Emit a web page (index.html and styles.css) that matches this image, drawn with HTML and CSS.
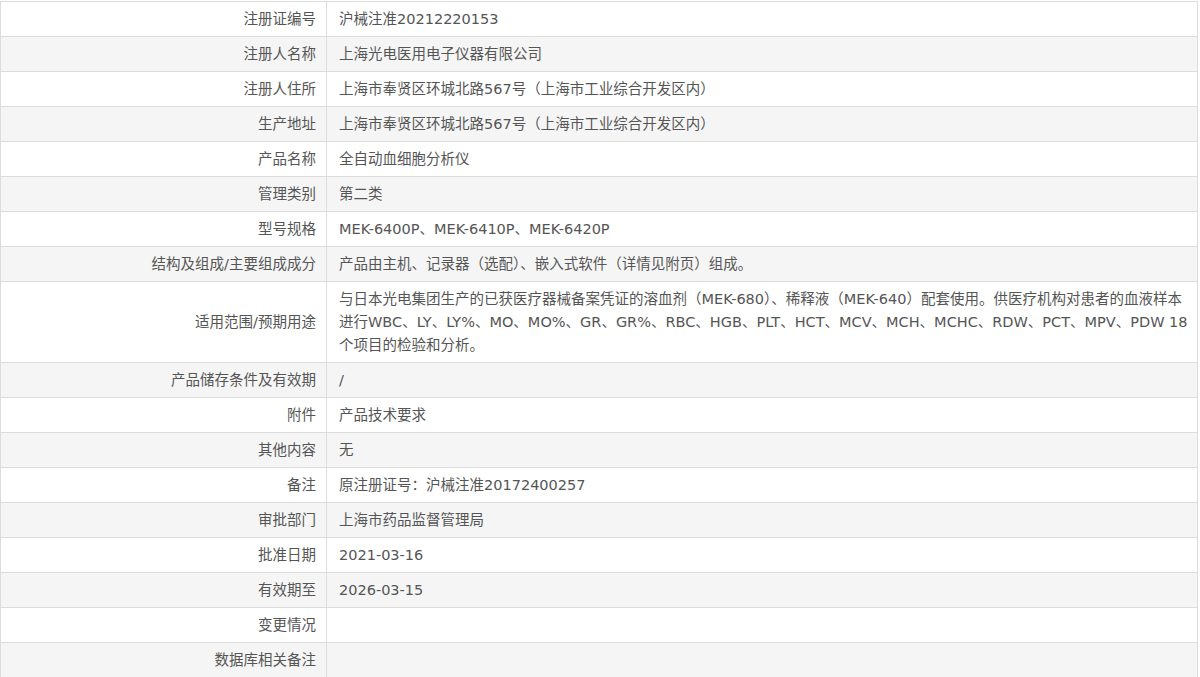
FILE: index.html
```html
<!DOCTYPE html>
<html lang="zh-CN">
<head>
<meta charset="utf-8">
<title>注册证信息</title>
<link rel="stylesheet" href="styles.css">
</head>
<body>
<table class="info">
<colgroup><col class="c-label"><col class="c-value"></colgroup>
<tbody>
<tr><th>注册证编号</th><td>沪械注准20212220153</td></tr>
<tr><th>注册人名称</th><td>上海光电医用电子仪器有限公司</td></tr>
<tr><th>注册人住所</th><td>上海市奉贤区环城北路567号（上海市工业综合开发区内）</td></tr>
<tr><th>生产地址</th><td>上海市奉贤区环城北路567号（上海市工业综合开发区内）</td></tr>
<tr><th>产品名称</th><td>全自动血细胞分析仪</td></tr>
<tr><th>管理类别</th><td>第二类</td></tr>
<tr><th>型号规格</th><td>MEK-6400P、MEK-6410P、MEK-6420P</td></tr>
<tr><th>结构及组成/主要组成成分</th><td>产品由主机、记录器（选配）、嵌入式软件（详情见附页）组成。</td></tr>
<tr><th>适用范围/预期用途</th><td>与日本光电集团生产的已获医疗器械备案凭证的溶血剂（MEK-680）、稀释液（MEK-640）配套使用。供医疗机构对患者的血液样本进行WBC、LY、LY%、MO、MO%、GR、GR%、RBC、HGB、PLT、HCT、MCV、MCH、MCHC、RDW、PCT、MPV、PDW 18个项目的检验和分析。</td></tr>
<tr><th>产品储存条件及有效期</th><td>/</td></tr>
<tr><th>附件</th><td>产品技术要求</td></tr>
<tr><th>其他内容</th><td>无</td></tr>
<tr><th>备注</th><td>原注册证号：沪械注准20172400257</td></tr>
<tr><th>审批部门</th><td>上海市药品监督管理局</td></tr>
<tr><th>批准日期</th><td>2021-03-16</td></tr>
<tr><th>有效期至</th><td>2026-03-15</td></tr>
<tr><th>变更情况</th><td></td></tr>
<tr><th>数据库相关备注</th><td></td></tr>
</tbody>
</table>
</body>
</html>
```

FILE: styles.css
```css
html, body {
  margin: 0;
  padding: 0;
  background: #ffffff;
}

body {
  font-family: "DejaVu Sans", "Noto Sans CJK SC", sans-serif;
  font-size: 14.5px;
  color: #555555;
}

.info {
  border-collapse: collapse;
  width: 1198px;
  margin-top: 1px;
  table-layout: fixed;
}

.c-label { width: 326px; }

.info th,
.info td {
  border: 1px solid #dcdcdc;
  line-height: 23px;
  padding: 6px 4px 5px 12px;
  vertical-align: middle;
  font-weight: normal;
}

.info th {
  text-align: right;
  padding-right: 10px;
  padding-left: 8px;
}

.info td {
  text-align: left;
}

.info tr:nth-child(even) {
  background: #f5f5f5;
}
```
